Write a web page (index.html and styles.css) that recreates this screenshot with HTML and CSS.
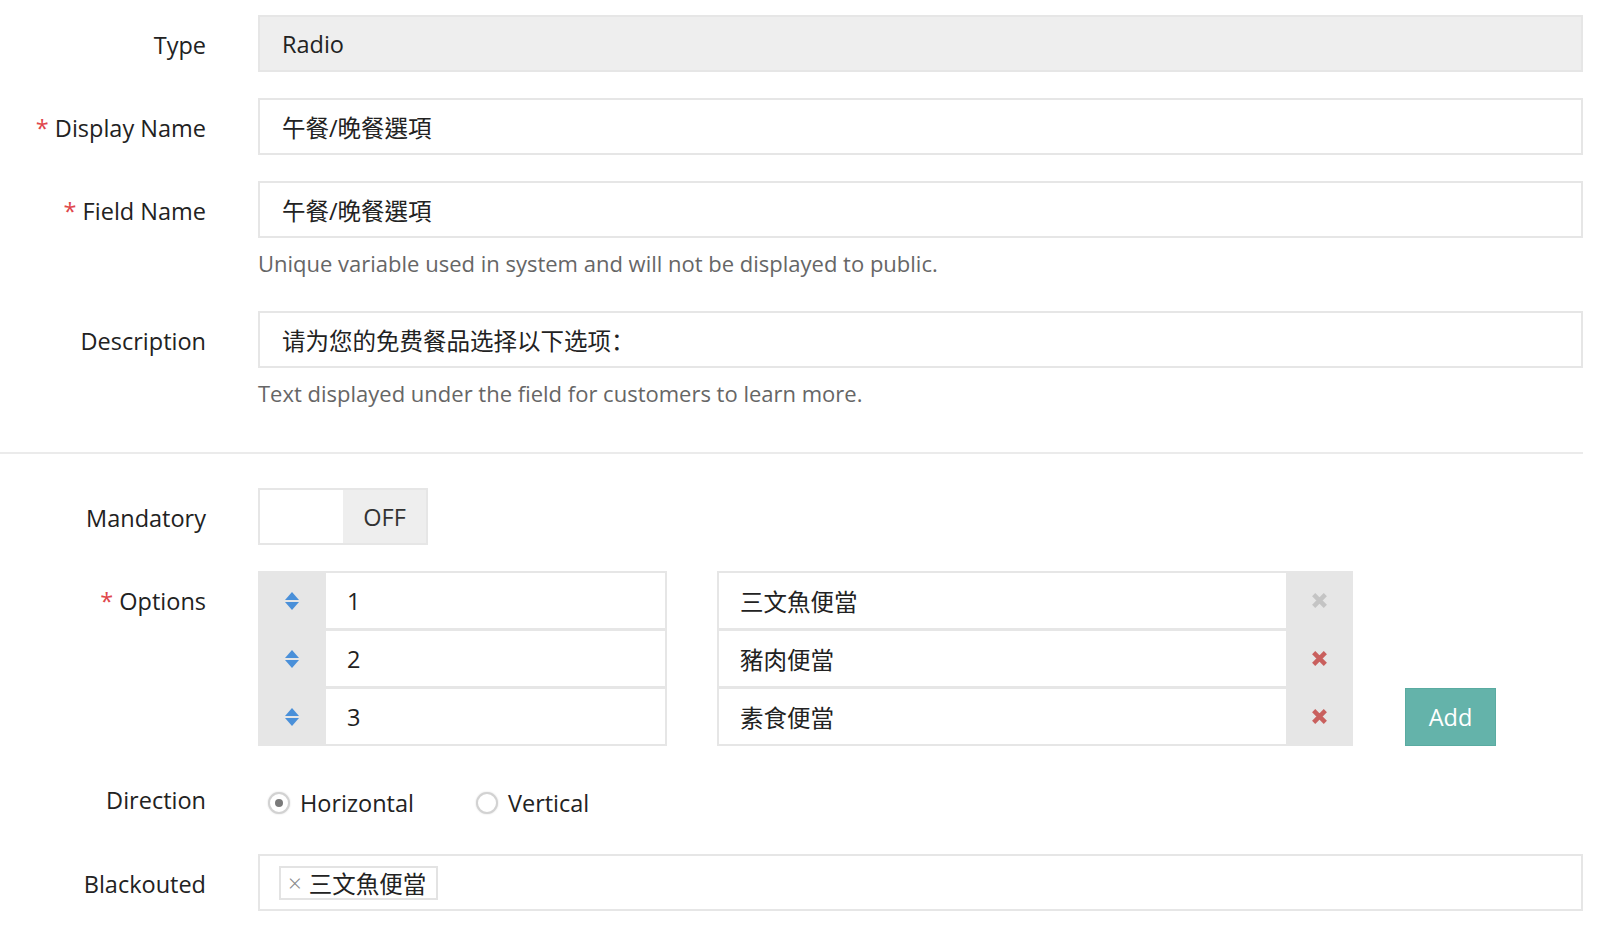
FILE: index.html
```html
<!DOCTYPE html>
<html lang="zh-Hant">
<head>
    <meta charset="UTF-8">
    <meta name="viewport" content="width=device-width, initial-scale=1.0">
    <title>Edit Field</title>
    <link rel="stylesheet" href="styles.css">
</head>
<body>
    <form class="form">
        <div class="section">
            <div class="row">
                <label class="label">Type</label>
                <div class="field">
                    <input type="text" class="input readonly" value="Radio" readonly>
                </div>
            </div>

            <div class="row">
                <label class="label" for="display"><span class="req">*</span> Display Name</label>
                <div class="field">
                    <input type="text" class="input" id="display" value="午餐/晚餐選項">
                </div>
            </div>

            <div class="row">
                <label class="label" for="fieldname"><span class="req">*</span> Field Name</label>
                <div class="field">
                    <input type="text" class="input" id="fieldname" value="午餐/晚餐選項">
                    <p class="help">Unique variable used in system and will not be displayed to public.</p>
                </div>
            </div>

            <div class="row">
                <label class="label" for="desc">Description</label>
                <div class="field">
                    <input type="text" class="input sc" id="desc" lang="zh-Hans" value="请为您的免费餐品选择以下选项：">
                    <p class="help">Text displayed under the field for customers to learn more.</p>
                </div>
            </div>
        </div>

        <div class="section">
            <div class="row">
                <label class="label">Mandatory</label>
                <div class="field">
                    <div class="toggle">
                        <span class="toggle-knob"></span>
                        <span class="toggle-state">OFF</span>
                    </div>
                </div>
            </div>

            <div class="row">
                <label class="label"><span class="req">*</span> Options</label>
                <div class="field options">
                    <div class="opt-box opt-keys">
                        <div class="opt-row">
                            <span class="handle"><svg width="14" height="18" viewBox="0 0 14 18"><path d="M0 8 L7 0 L14 8 Z M0 10 L14 10 L7 18 Z" fill="#4a90d9"/></svg></span>
                            <input type="text" class="opt-input" value="1">
                        </div>
                        <div class="opt-row">
                            <span class="handle"><svg width="14" height="18" viewBox="0 0 14 18"><path d="M0 8 L7 0 L14 8 Z M0 10 L14 10 L7 18 Z" fill="#4a90d9"/></svg></span>
                            <input type="text" class="opt-input" value="2">
                        </div>
                        <div class="opt-row">
                            <span class="handle"><svg width="14" height="18" viewBox="0 0 14 18"><path d="M0 8 L7 0 L14 8 Z M0 10 L14 10 L7 18 Z" fill="#4a90d9"/></svg></span>
                            <input type="text" class="opt-input" value="3">
                        </div>
                    </div>

                    <div class="opt-box opt-values">
                        <div class="opt-row">
                            <input type="text" class="opt-input" value="三文魚便當">
                            <span class="remove disabled"><svg width="17" height="17" viewBox="0 0 16 16"><path d="M2.5 2.5 L13.5 13.5 M13.5 2.5 L2.5 13.5" stroke="currentColor" stroke-width="4.2"/></svg></span>
                        </div>
                        <div class="opt-row">
                            <input type="text" class="opt-input" value="豬肉便當">
                            <span class="remove"><svg width="17" height="17" viewBox="0 0 16 16"><path d="M2.5 2.5 L13.5 13.5 M13.5 2.5 L2.5 13.5" stroke="currentColor" stroke-width="4.2"/></svg></span>
                        </div>
                        <div class="opt-row">
                            <input type="text" class="opt-input" value="素食便當">
                            <span class="remove"><svg width="17" height="17" viewBox="0 0 16 16"><path d="M2.5 2.5 L13.5 13.5 M13.5 2.5 L2.5 13.5" stroke="currentColor" stroke-width="4.2"/></svg></span>
                        </div>
                    </div>

                    <button type="button" class="btn-add">Add</button>
                </div>
            </div>

            <div class="row">
                <label class="label">Direction</label>
                <div class="field radios">
                    <label class="radio"><input type="radio" name="direction" checked> Horizontal</label>
                    <label class="radio"><input type="radio" name="direction"> Vertical</label>
                </div>
            </div>

            <div class="row">
                <label class="label">Blackouted</label>
                <div class="field">
                    <div class="input tags">
                        <span class="tag"><span class="tag-x">×</span>三文魚便當</span>
                    </div>
                </div>
            </div>
        </div>
    </form>
</body>
</html>
```

FILE: styles.css
```css
body { margin: 0; background: #fff; color: #222; font-family: "Open Sans", "Noto Sans CJK TC", sans-serif; font-size: 23.5px; }
.form { width: 1583px; }
.section { padding: 15px 0 11px; border-bottom: 2px solid #ebebeb; }
.section + .section { padding-top: 34px; border-bottom: none; }
.row { display: grid; grid-template-columns: 206px 1fr; column-gap: 52px; margin-bottom: 24px; }
.label { text-align: right; line-height: 57px; color: #222; padding-top: 2px; }
.req { color: #e0474c; }
.field { min-width: 0; }
.input { display: block; box-sizing: border-box; width: 100%; height: 57px; padding: 0 22px; border: 2px solid #e6e6e6; background: #fff; font: inherit; color: #222; outline: none; }
.input.readonly { background: #eee; }
.sc { font-family: "Open Sans", "Noto Sans CJK SC", sans-serif; }
.help { margin: 10px 0 9px; font-size: 22px; line-height: 30px; color: #666; }
.toggle { display: flex; width: 170px; height: 57px; box-sizing: border-box; border: 2px solid #e6e6e6; }
.toggle-knob { width: 83px; background: #fff; }
.toggle-state { flex: 1; background: #eee; display: flex; align-items: center; justify-content: center; color: #333; }
.options { display: flex; align-items: flex-end; }
.opt-box { background: #e6e6e6; padding: 2px; box-sizing: border-box; }
.opt-keys { width: 409px; padding-left: 0; }
.opt-values { width: 636px; margin-left: 50px; padding-right: 0; }
.opt-row { display: flex; height: 55px; }
.opt-row + .opt-row { margin-top: 3px; }
.handle { width: 68px; display: flex; align-items: center; justify-content: center; }
.opt-input { flex: 1; min-width: 0; border: none; background: #fff; font: inherit; color: #222; padding: 0 21px; outline: none; }
.remove { width: 67px; display: flex; align-items: center; justify-content: center; color: #c9605e; }
.remove.disabled { color: #c4c4c4; }
.btn-add { margin-left: 52px; width: 91px; height: 58px; background: #64b3aa; border: 1px solid #5aaba1; color: #fff; font: inherit; cursor: pointer; }
.radios { display: flex; align-items: center; height: 55px; padding-left: 10px; padding-top: 5px; }
.radio { display: flex; align-items: center; margin-right: 62px; }
.radio input { appearance: none; margin: 0 10px 0 0; width: 22px; height: 22px; border-radius: 50%; border: 2px solid #d2d2d2; box-shadow: 0 0 2px rgba(0,0,0,0.15); background: #fff; position: relative; }
.radio input:checked::after { content: ""; position: absolute; left: 5px; top: 5px; width: 8px; height: 8px; border-radius: 50%; background: #7a7a7a; }
.tags { display: flex; align-items: center; padding: 0 19px; }
.tag { display: flex; align-items: center; height: 34px; box-sizing: border-box; border: 2px solid #e3e3e3; padding: 0 10px 0 7px; font-size: 23.5px; }
.tag-x { color: #888; font-size: 24px; font-weight: 300; margin-right: 7px; }
```
